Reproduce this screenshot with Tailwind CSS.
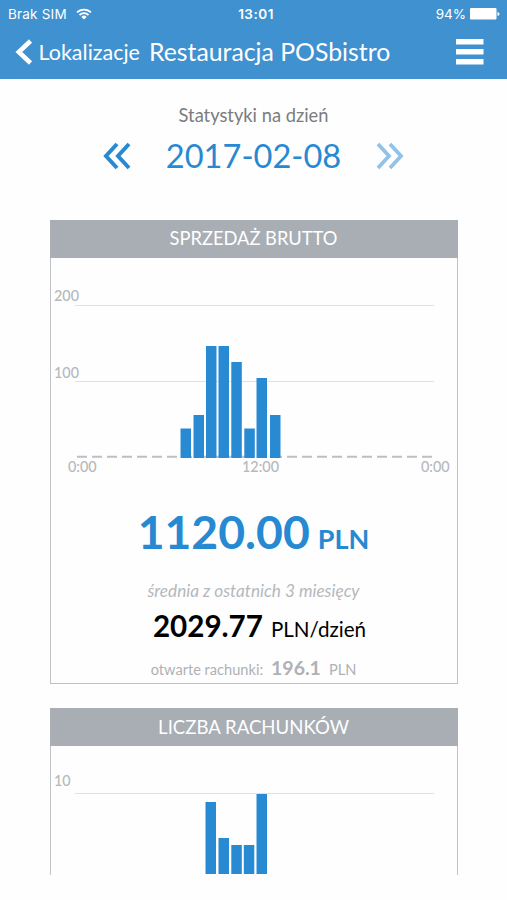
<!DOCTYPE html>
<html lang="pl">
<head>
  <meta charset="UTF-8" />
  <meta name="viewport" content="width=device-width, initial-scale=1.0"/>
  <title>Restauracja POSbistro | Statystyki</title>
  <script src="https://cdn.jsdelivr.net/npm/@tailwindcss/browser@4"></script>
</head>
<body class="h-[900px] overflow-hidden bg-[#fefefe] font-['Lato',sans-serif]">

  <!-- Header -->
  <header class="h-[79px] bg-[#4091d0] text-white">
    <!-- Status bar -->
    <div class="grid h-[27px] grid-cols-3 items-center pl-2 pr-[7px] pt-px font-['Inter',sans-serif] text-[13.5px]">
      <div class="flex items-center gap-[7px]">
        <span class="w-[61px] whitespace-nowrap tracking-[0.2px]">Brak SIM</span>
        <svg class="h-3 w-4" viewBox="0 0 16 12" fill="none" stroke="white" stroke-width="1.8">
          <path d="M1 4.4a10 10 0 0 1 14 0M3.5 7a6.4 6.4 0 0 1 9 0"/>
          <path d="M5.4 8.9a3.7 3.7 0 0 1 5.2 0L8 11.6z" fill="white" stroke="none"/>
        </svg>
      </div>
      <span class="pl-1 text-center font-semibold tracking-[0.5px]">13:01</span>
      <div class="flex items-center justify-end gap-1">
        <span>94%</span>
        <svg class="h-3 w-[30px]" viewBox="0 0 30 12" fill="white">
          <rect x="0" y="0" width="26.5" height="11.5" rx="1"/>
          <path d="M27.5 4v4q2-.6 2-2t-2-2z"/>
        </svg>
      </div>
    </div>
    <!-- Nav bar -->
    <nav class="flex h-[50px] items-center pl-[15px] pr-[23px]">
      <svg class="h-[26px] w-[18px]" viewBox="0 0 18 26" fill="none" stroke="white" stroke-width="4.6">
        <path d="M15.5 2 3.8 13l11.700 11"/>
      </svg>
      <span class="ml-[5.5px] w-[110.5px] whitespace-nowrap text-[21.5px]">Lokalizacje</span>
      <h1 class="whitespace-nowrap text-[24.8px] leading-9">Restauracja POSbistro</h1>
      <svg class="ml-auto h-[26px] w-7" viewBox="0 0 28 26" fill="white">
        <rect y="0" width="27.5" height="5.5"/>
        <rect y="10" width="27.5" height="5.5"/>
        <rect y="20" width="27.5" height="5.5"/>
      </svg>
    </nav>
  </header>

  <main>
    <!-- Date picker -->
    <section class="flex h-[141px] flex-col items-center pt-6">
      <p class="text-[18.3px] leading-6 text-[#7b7c7e]">Statystyki na dzień</p>
      <div class="mt-[9px] flex h-10 items-center text-[#2789d2]">
        <svg class="h-7 w-7" viewBox="0 0 28 28" fill="none" stroke="currentColor" stroke-width="4">
          <path d="M14 2 3 14l11 12M26 2 15 14l11 12"/>
        </svg>
        <span class="w-[245px] text-center text-[32.6px]">2017-02-08</span>
        <svg class="h-7 w-7 text-[#93c2e8]" viewBox="0 0 28 28" fill="none" stroke="currentColor" stroke-width="3.8">
          <path d="M2 2l11 12L2 26M14 2l11 12-11 12"/>
        </svg>
      </div>
    </section>

    <!-- Sprzedaż brutto -->
    <section class="mx-auto h-[464px] w-[408px] border border-[#bfc2c6]">
      <h2 class="-mx-px -mt-px h-[38px] bg-[#a8aeb4] text-center text-[18.3px] leading-[37px] text-white">SPRZEDAŻ BRUTTO</h2>
      <svg class="-mt-px h-[225px] w-[406px]" viewBox="0 0 406 225">
        <g stroke="#dfe1e3" stroke-width="1.2">
          <path d="M24 48.5H383M24 124.5H383"/>
        </g>
        <path d="M26 199.700H381" stroke="#bdbfc2" stroke-width="2" stroke-dasharray="10 5"/>
        <g fill="#298ad4">
          <rect x="129.5" y="171.5" width="10.5" height="29.5"/>
          <rect x="142.5" y="158" width="10.5" height="43"/>
          <rect x="155" y="89" width="10.5" height="112"/>
          <rect x="167.5" y="89" width="10.5" height="112"/>
          <rect x="180.3" y="105" width="10.5" height="96"/>
          <rect x="193.3" y="171.5" width="10.5" height="29.5"/>
          <rect x="205.5" y="121" width="10.5" height="80"/>
          <rect x="219" y="158" width="10.5" height="43"/>
        </g>
        <g fill="#b5b8bc" font-size="14.4" font-weight="500">
          <text x="3" y="44">200</text>
          <text x="3" y="121">100</text>
          <text x="17" y="215">0:00</text>
          <text x="191" y="215">12:00</text>
          <text x="370" y="215">0:00</text>
        </g>
      </svg>
      <div class="flex h-[97px] items-baseline justify-center gap-2 font-bold leading-[98px] text-[#2789d2]">
        <span class="text-[46.3px]">1120.00</span>
        <span class="text-[27px]">PLN</span>
      </div>
      <p class="text-center text-[17.2px] italic leading-6 text-[#b5b8bc]">średnia z ostatnich 3 miesięcy</p>
      <div class="mt-[3px] flex h-10 items-baseline justify-center gap-2 pl-3 leading-[39px] text-black">
        <span class="text-[29.6px] font-bold">2029.77</span>
        <span class="text-[20.6px]">PLN/dzień</span>
      </div>
      <div class="mt-1.5 flex h-8 items-baseline justify-center gap-2 leading-8 text-[#aeb1b5]">
        <span class="text-[14.6px]">otwarte rachunki:</span>
        <span class="text-[19.5px] font-bold">196.1</span>
        <span class="text-[14.6px]">PLN</span>
      </div>
    </section>

    <!-- Liczba rachunków -->
    <section class="mx-auto mt-6 h-[167px] w-[408px] border-x border-[#bfc2c6]">
      <h2 class="-mx-px h-[38px] bg-[#a8aeb4] text-center text-[18.6px] leading-[38px] text-white">LICZBA RACHUNKÓW</h2>
      <svg class="h-[128px] w-[406px]" viewBox="0 0 406 128">
        <path d="M24 47.5H383" stroke="#dfe1e3" stroke-width="1.2"/>
        <g fill="#298ad4">
          <rect x="154.5" y="56" width="10.5" height="72"/>
          <rect x="167.5" y="92" width="10.5" height="36"/>
          <rect x="180.3" y="99" width="10.5" height="29"/>
          <rect x="192.8" y="99" width="10.5" height="29"/>
          <rect x="205.5" y="48" width="10.5" height="80"/>
        </g>
        <text x="3" y="40" fill="#b5b8bc" font-size="14.4" font-weight="500">10</text>
      </svg>
    </section>
  </main>

</body>
</html>
